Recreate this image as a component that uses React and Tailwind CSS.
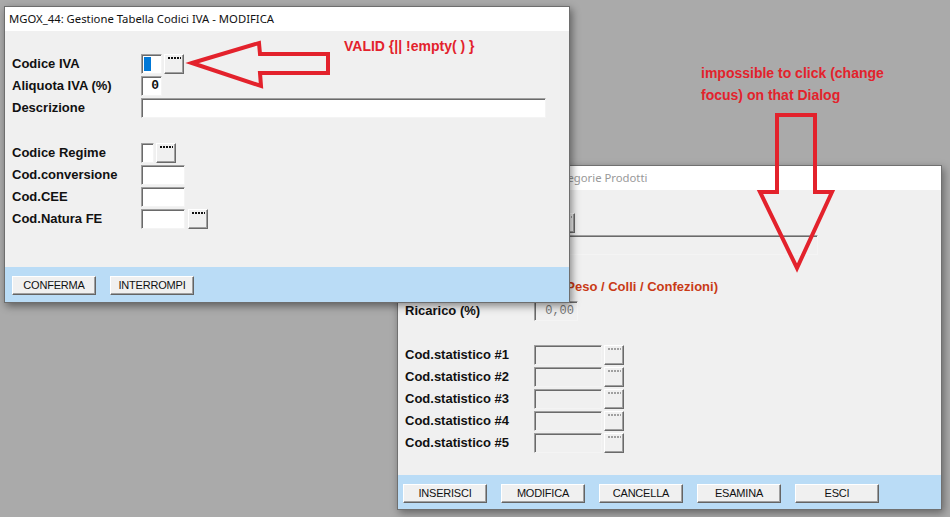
const RED = "#e3222c";

function Field({ w, disabled, children, className = "" }) {
  return (
    <div
      className={`${w} h-[20px] border border-t-[#a0a0a0] border-l-[#a0a0a0] border-r-[#f4f4f4] border-b-[#f4f4f4] shadow-[inset_1px_1px_0_#6a6a6a] flex items-center ${
        disabled ? "bg-[#f0f0f0]" : "bg-white"
      } ${className}`}
    >
      {children}
    </div>
  );
}

function DotsBtn({ disabled }) {
  return (
    <div className="w-[20px] h-[20px] bg-[#f0f0f0] border border-white border-r-[#6a6a6a] border-b-[#6a6a6a] shadow-[inset_-1px_-1px_0_#a0a0a0] flex justify-center pt-[2px]">
      <svg width="13" height="2">
        <line
          x1="0"
          y1="1"
          x2="13"
          y2="1"
          stroke={disabled ? "#a0a0a0" : "#111"}
          strokeWidth="2"
          strokeDasharray="2 1"
        />
      </svg>
    </div>
  );
}

function Btn({ children }) {
  return (
    <div className="w-[84px] h-[19px] bg-[#f0f0f0] border border-white border-r-[#646464] border-b-[#646464] shadow-[inset_-1px_-1px_0_#a0a0a0] flex items-center justify-center text-[11px] text-[#111] tracking-[-0.2px]">
      {children}
    </div>
  );
}

function Row({ label, children, className = "" }) {
  return (
    <div className={`h-[22px] flex items-center ${className}`}>
      <div className="w-[129px] text-[13px] font-bold text-[#111] leading-none -mt-[2px]">{label}</div>
      <div className="flex items-center gap-[2px]">{children}</div>
    </div>
  );
}

function TitleBar({ children, inactive }) {
  return (
    <div
      className={`h-[24px] bg-white flex items-center pl-[4px] text-[11.3px] font-['Noto_Sans',sans-serif] whitespace-nowrap ${
        inactive ? "text-[#999]" : "text-[#111]"
      }`}
    >
      {children}
    </div>
  );
}

function CategorieWindow() {
  const stats = [1, 2, 3, 4, 5];
  return (
    <div className="absolute left-[397px] top-[165px] w-[545px] h-[345px] border border-[#707070] bg-[#f0f0f0] flex flex-col shadow-[2px_3px_8px_rgba(0,0,0,0.4)]">
      <TitleBar inactive>MGOX_20: Gestione Tabella Categorie Prodotti</TitleBar>
      <div className="flex-1 pt-[22px] pl-[7px]">
        <Row label="Codice">
          <Field w="w-[19px]" disabled />
          <DotsBtn disabled />
        </Row>
        <Row label="Descrizione">
          <Field w="w-[284px]" disabled />
        </Row>
        <div className="h-[22px]" />
        <div className="h-[22px] flex items-center pl-[157px] text-[13px] font-bold text-[#c93a16] whitespace-nowrap -mt-[2px]">
          (Peso / Colli / Confezioni)
        </div>
        <Row label="Ricarico (%)" className="mt-[2px]">
          <Field w="w-[44px]" disabled className="justify-end pr-[3px]">
            <span className="font-['Liberation_Mono',monospace] text-[12px] text-[#777]">0,00</span>
          </Field>
        </Row>
        <div className="h-[22px]" />
        {stats.map((n) => (
          <Row key={n} label={`Cod.statistico #${n}`}>
            <Field w="w-[68px]" disabled />
            <DotsBtn disabled />
          </Row>
        ))}
      </div>
      <div className="h-[34px] bg-[#badcf6] flex items-start pt-[9px] pl-[5px] gap-[14px]">
        <Btn>INSERISCI</Btn>
        <Btn>MODIFICA</Btn>
        <Btn>CANCELLA</Btn>
        <Btn>ESAMINA</Btn>
        <Btn>ESCI</Btn>
      </div>
    </div>
  );
}

function IvaWindow() {
  return (
    <div className="absolute left-[4px] top-[6px] w-[566px] h-[297px] border border-[#6e6e6e] bg-[#f0f0f0] flex flex-col shadow-[2px_3px_8px_rgba(0,0,0,0.45)]">
      <TitleBar>MGOX_44: Gestione Tabella Codici IVA - MODIFICA</TitleBar>
      <div className="flex-1 pt-[22px] pl-[7px]">
        <Row label="Codice IVA">
          <Field w="w-[21px]" className="pl-[2px]">
            <div className="w-[7px] h-[14px] bg-[#0078d7]" />
          </Field>
          <DotsBtn />
        </Row>
        <Row label="Aliquota IVA (%)">
          <Field w="w-[21px]" className="justify-end pr-[2px]">
            <span className="font-['Liberation_Mono',monospace] font-bold text-[13px] text-[#111]">0</span>
          </Field>
        </Row>
        <Row label="Descrizione">
          <Field w="w-[405px]" />
        </Row>
        <div className="mt-[23px]">
          <Row label="Codice Regime">
            <Field w="w-[13px]" />
            <DotsBtn />
          </Row>
          <Row label="Cod.conversione">
            <Field w="w-[44px]" />
          </Row>
          <Row label="Cod.CEE">
            <Field w="w-[44px]" />
          </Row>
          <Row label="Cod.Natura FE">
            <Field w="w-[44px]" className="mr-[1px]" />
            <DotsBtn />
          </Row>
        </div>
      </div>
      <div className="h-[35px] bg-[#badcf6] flex items-start pt-[9px] pl-[7px] gap-[14px]">
        <Btn>CONFERMA</Btn>
        <Btn>INTERROMPI</Btn>
      </div>
    </div>
  );
}

function Annotations() {
  return (
    <>
      <svg className="absolute left-0 top-0 pointer-events-none" width="950" height="517">
        <polygon
          points="192,63 259,43 260,54 328,54 328,73 260,73 261,86"
          fill="none"
          stroke={RED}
          strokeWidth="4"
          strokeLinejoin="miter"
        />
        <polygon
          points="777,115 815,115 815,192 832,192 797,268 760,192 777,192"
          fill="none"
          stroke={RED}
          strokeWidth="4"
          strokeLinejoin="miter"
        />
      </svg>
      <div
        className="absolute left-[344px] top-[38px] text-[14px] font-bold leading-[16px] whitespace-nowrap"
        style={{ color: RED }}
      >
        {"VALID {|| !empty( ) }"}
      </div>
      <div
        className="absolute left-[701px] top-[62px] text-[14px] font-bold leading-[22px] whitespace-nowrap"
        style={{ color: RED }}
      >
        <div>impossible to click (change</div>
        <div>focus) on that Dialog</div>
      </div>
    </>
  );
}

export default function App() {
  return (
    <div className="relative w-[950px] h-[517px] overflow-hidden bg-[#aaaaaa] font-['Liberation_Sans',Arial,sans-serif]">
      <CategorieWindow />
      <IvaWindow />
      <Annotations />
    </div>
  );
}
